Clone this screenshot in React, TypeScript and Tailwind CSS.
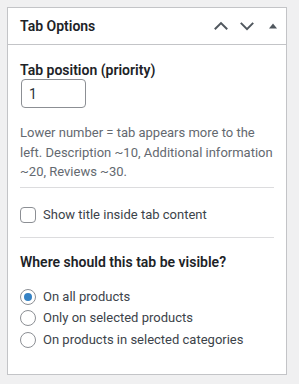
import React, { useState } from 'react';

const font = { fontFamily: '"Segoe UI", Roboto, sans-serif' };

export default function App() {
  const [priority, setPriority] = useState('1');
  const [showTitle, setShowTitle] = useState(false);
  const [visibility, setVisibility] = useState('all');

  const options = [
    { value: 'all', label: 'On all products' },
    { value: 'products', label: 'Only on selected products' },
    { value: 'categories', label: 'On products in selected categories' },
  ];

  return (
    <div className="w-[299px] h-[384px] bg-[#f0f0f1] pt-[7px] pl-[7px]" style={font}>
      <div className="w-[280px] h-[368px] bg-white border border-[#c3c4c7] flex flex-col">
        <div className="h-[37px] border-b border-[#c3c4c7] flex items-center pl-[12px]">
          <h2 className="text-[14px] font-semibold text-[#1d2327] flex-1">Tab Options</h2>
          <div className="flex items-center text-[#50575e]">
            <button className="w-[26px] h-[26px] flex items-center justify-center">
              <svg width="14" height="14" viewBox="0 0 14 14" fill="none" stroke="currentColor" strokeWidth="2"><path d="M0.8 10.3l6.2-6.2 6.2 6.2" /></svg>
            </button>
            <button className="w-[26px] h-[26px] flex items-center justify-center">
              <svg width="14" height="14" viewBox="0 0 14 14" fill="none" stroke="currentColor" strokeWidth="2"><path d="M0.8 3.9l6.2 6.2 6.2-6.2" /></svg>
            </button>
            <button className="w-[26px] h-[26px] flex items-center justify-center">
              <svg width="10" height="10" viewBox="0 0 10 10" fill="currentColor"><path d="M1 7.5h8L5 2.5z" /></svg>
            </button>
          </div>
        </div>

        <div className="px-[12px] pt-[16px] text-[#3c434a]">
          <label className="block text-[14px] font-semibold text-[#1d2327] leading-[18px]">Tab position (priority)</label>
          <input
            type="number"
            value={priority}
            onChange={(e) => setPriority(e.target.value)}
            className="mt-0 ml-[1px] w-[65px] h-[29px] border border-[#8c8f94] rounded-[4px] px-[7px] text-[14px] text-[#2c3338] outline-none [appearance:textfield]"
          />
          <p className="mt-[15px] text-[13px] leading-[19.5px] text-[#646970]">
            Lower number = tab appears more to the left. Description ~10, Additional information ~20, Reviews ~30.
          </p>
          <hr className="mt-[5px] border-t border-[#dcdcde]" />

          <label className="flex items-center gap-[7px] mt-[19px] text-[13px] leading-[16px] text-[#3c434a] cursor-pointer">
            <input
              type="checkbox"
              checked={showTitle}
              onChange={(e) => setShowTitle(e.target.checked)}
              className="appearance-none w-[16px] h-[16px] border border-[#8c8f94] rounded-[4px] bg-white"
            />
            Show title inside tab content
          </label>
          <hr className="mt-[14px] border-t border-[#dcdcde]" />

          <p className="mt-[15px] text-[14px] font-semibold text-[#1d2327] leading-[18px]">Where should this tab be visible?</p>

          <div className="mt-[18px] flex flex-col gap-[5.5px]">
            {options.map((o) => (
              <label key={o.value} className="flex items-center gap-[7px] text-[13px] text-[#3c434a] leading-[16px] cursor-pointer">
                <span className="w-[16px] h-[16px] rounded-full border border-[#8c8f94] bg-white flex items-center justify-center">
                  {visibility === o.value && <span className="w-[8px] h-[8px] rounded-full bg-[#3582c4]" />}
                </span>
                <input type="radio" className="hidden" checked={visibility === o.value} onChange={() => setVisibility(o.value)} />
                {o.label}
              </label>
            ))}
          </div>
        </div>
      </div>
    </div>
  );
}
